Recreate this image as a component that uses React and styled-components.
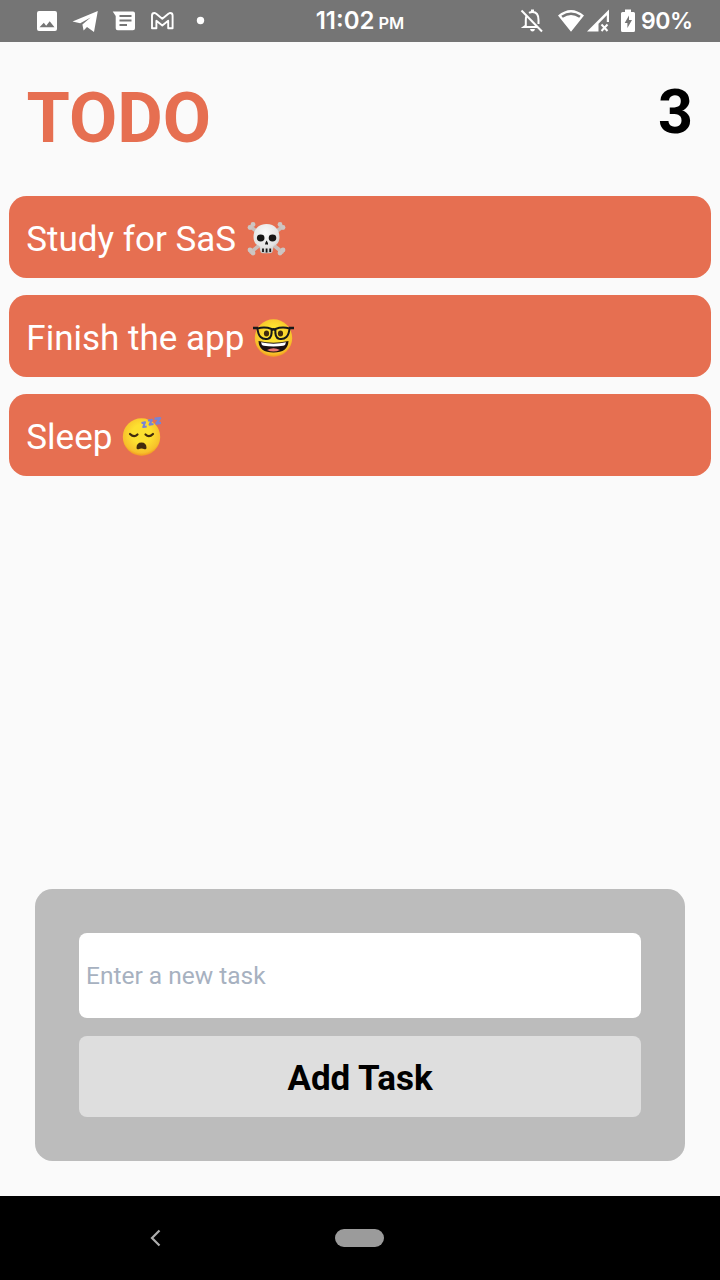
import React from 'react';
import styled, { createGlobalStyle } from 'styled-components';

const GlobalStyle = createGlobalStyle`
  * { box-sizing: border-box; }
  body { margin: 0; background: #fafafa; font-family: Roboto, sans-serif; }
`;

const Screen = styled.div`
  width: 720px;
  height: 1280px;
  display: flex;
  flex-direction: column;
  overflow: hidden;
  background: #fafafa;
`;

const StatusBar = styled.header`
  height: 42px;
  flex: none;
  display: grid;
  grid-template-columns: 1fr auto 1fr;
  grid-template-rows: 42px;
  background: #757575;
  color: #fff;
  font-family: Inter, sans-serif;
  font-weight: 600;
`;

const Notifications = styled.div`
  height: 42px;
  padding-left: 34px;
`;

const Clock = styled.div`
  font-size: 24px;
  line-height: 41px;
  white-space: nowrap;
`;

const Meridiem = styled.span`
  margin-left: 4px;
  font-size: 16.5px;
  line-height: 1;
`;

const SystemStatus = styled.div`
  height: 42px;
  display: flex;
  justify-content: flex-end;
  padding-right: 28px;
`;

const Battery = styled.span`
  width: 51px;
  margin-left: 4px;
  font-size: 23px;
  line-height: 42px;
  letter-spacing: -0.5px;
`;

const Heading = styled.div`
  flex: none;
  height: 154px;
  display: flex;
  justify-content: space-between;
  padding: 35px 27px 0 26.5px;
`;

const Title = styled.h1`
  margin: 0;
  font-size: 70px;
  line-height: 82px;
  font-weight: 700;
  color: #e66f51;
`;

const Count = styled.div`
  font-size: 61px;
  line-height: 70px;
  font-weight: 700;
  color: #000;
`;

const TaskList = styled.ul`
  flex: 1;
  margin: 0;
  padding: 0 9px;
  list-style: none;
  display: flex;
  flex-direction: column;
  gap: 17px;
`;

const Task = styled.li`
  height: 82px;
  display: flex;
  align-items: center;
  gap: 9px;
  padding: 5px 17.3px 0;
  border-radius: 17.5px;
  background: #e66f51;
  color: #fff;
  font-size: 35px;
  line-height: 41px;
`;

const Emoji = styled.svg`
  width: 42px;
  height: 42px;
  flex: none;
`;

const Form = styled.form`
  flex: none;
  height: 272px;
  margin: 0 35px 35px;
  padding: 44px;
  display: flex;
  flex-direction: column;
  gap: 18px;
  border-radius: 17.5px;
  background: #bcbcbc;
`;

const Input = styled.input`
  width: 100%;
  height: 85px;
  flex: none;
  border: 0;
  border-radius: 8px;
  padding: 0 7px;
  background: #fff;
  color: #000;
  font: 24.5px Roboto, sans-serif;
  &::placeholder { color: #a7b1c0; opacity: 1; }
`;

const AddButton = styled.button`
  height: 81px;
  flex: none;
  border: 0;
  border-radius: 8px;
  padding: 3px 0 0;
  background: #dedede;
  color: #000;
  font: 700 35px Roboto, sans-serif;
`;

const NavigationBar = styled.nav`
  flex: none;
  height: 84px;
  display: grid;
  grid-template-columns: 310px 99px 1fr;
  align-items: center;
  justify-items: center;
  background: #000;
`;

const HomePill = styled.div`
  width: 49px;
  height: 18px;
  border-radius: 9px;
  background: #9b9b9b;
`;

const Glyph = styled.svg`
  display: block;
`;

function NotificationIcons() {
  return (
    <Glyph width="180" height="42" viewBox="34 0 180 42" fill="#fff">
      <path fillRule="evenodd" d="M39 11h16q2 0 2 2v16q0 2-2 2H39q-2 0-2-2V13q0-2 2-2zM39.500 27.300h15l-4.800-6-3.500 4.500-2.400-3z" />
      <path d="M72.500 21.400 97.800 11 94 32l-7-5-3.400 3.600-1.200-6 8.200-7.200-10.400 5.800z" />
      <path fillRule="evenodd" d="M112.700 11.500H133q2 0 2 2v14.800q0 2-2 2h-15.300q-2 0-2-2V16zM119.500 15v2h12v-2zm0 4.500v2h12v-2zm0 4.500v2h7.500v-2z" />
      <path d="M152 28.300V15.500q0-2.500 2.400-2.500.8 0 1.500.6l6.400 5.200 6.400-5.200q.7-.6 1.500-.6 2.400 0 2.400 2.500v12.800h-4.400v-7.500l-5.900 4.700-5.900-4.700v7.500z" fill="none" stroke="#fff" strokeWidth="1.900" strokeLinejoin="round" />
      <circle cx="200.500" cy="20.500" r="3.700" />
    </Glyph>
  );
}

function SystemIcons() {
  return (
    <Glyph width="118" height="42" viewBox="519 0 118 42" fill="#fff">
      <g fill="none" stroke="#fff" strokeWidth="2">
        <path d="m521.500 10.500 20.500 21" />
        <path d="M526.500 16q-.7 1.500-.7 4v5.500l-2 1.500h13.500M529 12.900q1.500-.9 3.500-.9 6 0 6 8v4" />
        <path d="M532.500 9.500V12" strokeWidth="3" />
      </g>
      <path d="M530 29h5q-.5 2.500-2.500 2.500T530 29z" />
      <path fillRule="evenodd" d="M558 15.500Q571 4.500 584 15.500L571 31.700zM561.300 15.800l1.500 1.900q8.200-5.200 16.400 0l1.500-1.900q-9.700-6.800-19.400 0z" />
      <path fillRule="evenodd" d="M609 9.500V22h-2.200v-6.800l-8.300 8.500V31.500H587z" />
      <path d="m601.500 24.500 6 6.500m0-6.500-6 6.500" stroke="#fff" strokeWidth="2" />
      <path fillRule="evenodd" d="M625 9.500h6V12h2.500q1.500 0 1.500 1.500v17q0 1.500-1.500 1.500h-11q-1.500 0-1.500-1.500v-17q0-1.500 1.500-1.500h2.500zM629 15.500l-4.300 7.500h2.700v5l4.600-8h-3z" />
    </Glyph>
  );
}

function Skull() {
  return (
    <Emoji viewBox="-1 0 42 42">
      <defs>
        <radialGradient id="bone" cx=".45" cy=".3" r=".75">
          <stop offset="0" stopColor="#fafafa" />
          <stop offset=".65" stopColor="#e4e4e4" />
          <stop offset="1" stopColor="#bdbdbd" />
        </radialGradient>
      </defs>
      <g stroke="#c9bfbc" strokeWidth="3.600" strokeLinecap="round">
        <path d="m5 8 31 25M36 8 5 33" />
      </g>
      <g fill="#cdc5c2">
        <circle cx="7" cy="5.500" r="2.400" /><circle cx="4" cy="8.500" r="2.400" />
        <circle cx="34" cy="5.500" r="2.400" /><circle cx="37" cy="8.500" r="2.400" />
        <circle cx="4" cy="31" r="2.400" /><circle cx="7" cy="34" r="2.400" />
        <circle cx="37" cy="31" r="2.400" /><circle cx="34" cy="34" r="2.400" />
      </g>
      <path d="M20.500 5C12 5 7.500 11 7.500 18c0 5 2.300 8 6 9l.7 5q.3 2.300 2.600 2.300h7.400q2.300 0 2.600-2.300l.7-5c3.700-1 6-4 6-9 0-7-4.500-13-13-13z" fill="url(#bone)" />
      <ellipse cx="14.700" cy="19" rx="3.800" ry="3.400" fill="#161616" />
      <ellipse cx="26.500" cy="19" rx="3.800" ry="3.400" fill="#161616" />
      <path d="M20.600 21.500q2.600 4 .6 4.300l-.6-.5-.6.5q-2-.3.600-4.300z" fill="#161616" />
      <path d="M17 29.500v3.500M20.600 29.500v4M24.200 29.500v3.500" stroke="#161616" strokeWidth="1.800" />
    </Emoji>
  );
}

function FaceBase({ id }) {
  return (
    <>
      <defs>
        <radialGradient id={id} cx=".5" cy=".42" r=".56">
          <stop offset=".45" stopColor="#fde030" />
          <stop offset=".9" stopColor="#f7c02b" />
          <stop offset="1" stopColor="#f4a223" />
        </radialGradient>
      </defs>
      <circle cx="20.500" cy="19.500" r="18.700" fill={`url(#${id})`} />
    </>
  );
}

function Nerd() {
  return (
    <Emoji viewBox="0 -0.5 42 42">
      <FaceBase id="nerd-face" />
      <ellipse cx="13.500" cy="15" rx="2.600" ry="3" fill="#422b0d" />
      <ellipse cx="27.500" cy="15" rx="2.600" ry="3" fill="#422b0d" />
      <path d="M5.500 22.500q15 3.500 30 0-.5 11.500-15 11.500t-15-11.500z" fill="#1b1010" />
      <path d="M8 23.800q12.500 2.700 25 0-.3 3-2.700 3.400-9.800 1.500-19.600 0-2.400-.4-2.700-3.400z" fill="#fff" />
      <path d="M14 31.500q6.500-3.700 13 0-6.500 3-13 0z" fill="#ed7770" />
      <g fill="none" stroke="#17191a" strokeWidth="2">
        <path d="M4.500 10q7.500-2 14 .5 1 8.500-3.500 9.800-9.500 1.700-10.500-10.300zM36.500 10q-7.500-2-14 .5-1 8.500 3.500 9.800 9.500 1.700 10.500-10.300z" />
        <path d="M0 9.500h5m13.300 2q2.200-1.500 4.400 0M36 9.500h5" strokeWidth="2.600" />
      </g>
    </Emoji>
  );
}

function Sleeping() {
  return (
    <Emoji viewBox="0 -0.5 42 42">
      <FaceBase id="sleeping-face" />
      <g fill="none" stroke="#422b0d" strokeWidth="2.200" strokeLinecap="round">
        <path d="M9 16.500q4 4 7.500.5M24.500 17q3.500 3.500 7.500-.5" />
      </g>
      <path d="M15.500 30.500q0-5.500 5-5.500t5 5.500q-.2 1.700-2 1.200-3-1.200-6 0-1.800.5-2-1.200z" fill="#422b0d" />
      <g fill="none" stroke="#7884d4" strokeWidth="2" strokeLinejoin="round">
        <path d="m20.500 5.500 3.500-.7-1.800 4.700 3.500-.5" />
        <path d="m27 3 4-.8-2.500 5 4-.7" />
        <path d="m33.500 1.200 5.500-.5-3.500 5.300 4.500-.6" strokeWidth="2.400" />
      </g>
    </Emoji>
  );
}

const tasks = [
  { label: 'Study for SaS', icon: <Skull /> },
  { label: 'Finish the app', icon: <Nerd /> },
  { label: 'Sleep', icon: <Sleeping /> },
];

export default function App() {
  return (
    <Screen>
      <GlobalStyle />
      <StatusBar>
        <Notifications><NotificationIcons /></Notifications>
        <Clock>11:02<Meridiem>PM</Meridiem></Clock>
        <SystemStatus><SystemIcons /><Battery>90%</Battery></SystemStatus>
      </StatusBar>
      <Heading>
        <Title>TODO</Title>
        <Count>{tasks.length}</Count>
      </Heading>
      <TaskList>
        {tasks.map((task) => (
          <Task key={task.label}><span>{task.label}</span>{task.icon}</Task>
        ))}
      </TaskList>
      <Form onSubmit={(event) => event.preventDefault()}>
        <Input placeholder="Enter a new task" />
        <AddButton type="submit">Add Task</AddButton>
      </Form>
      <NavigationBar>
        <Glyph width="14" height="20" viewBox="0 0 14 20">
          <path d="M11.500 2.500 4 10l7.500 7.500" fill="none" stroke="#adadad" strokeWidth="2.200" />
        </Glyph>
        <HomePill />
      </NavigationBar>
    </Screen>
  );
}
